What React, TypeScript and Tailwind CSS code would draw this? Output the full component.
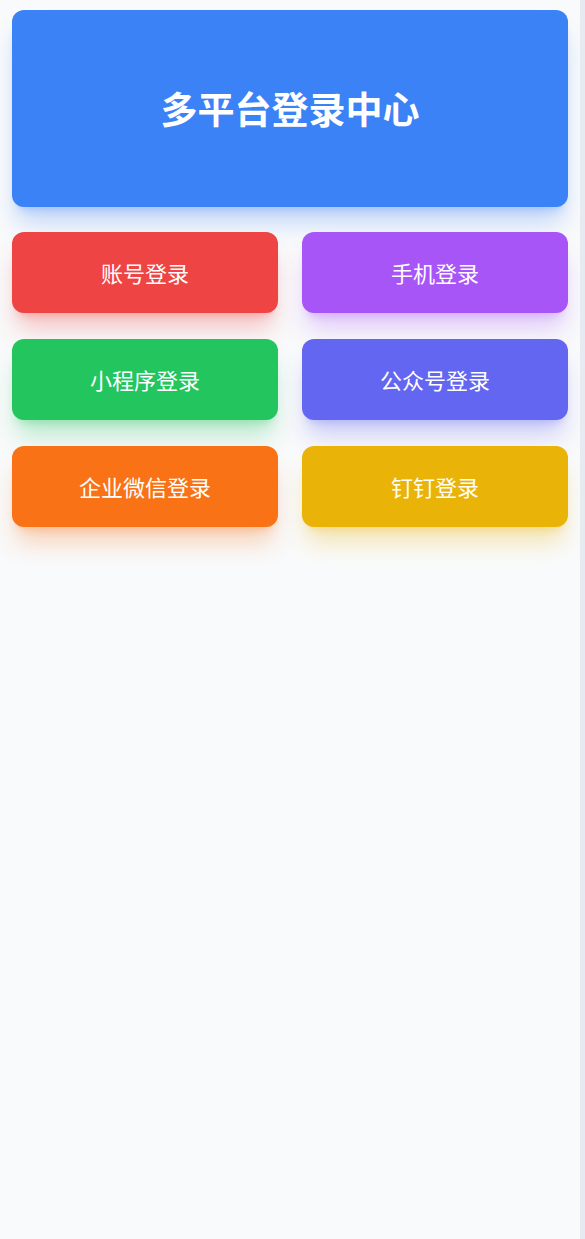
const buttons = [
  { label: "账号登录", cls: "bg-[#ef4444] shadow-[0_20px_25px_-5px_rgba(239,68,68,0.3),0_8px_10px_-6px_rgba(239,68,68,0.3)]" },
  { label: "手机登录", cls: "bg-[#a855f7] shadow-[0_20px_25px_-5px_rgba(168,85,247,0.3),0_8px_10px_-6px_rgba(168,85,247,0.3)]" },
  { label: "小程序登录", cls: "bg-[#22c55e] shadow-[0_20px_25px_-5px_rgba(34,197,94,0.3),0_8px_10px_-6px_rgba(34,197,94,0.3)]" },
  { label: "公众号登录", cls: "bg-[#6366f1] shadow-[0_20px_25px_-5px_rgba(99,102,241,0.3),0_8px_10px_-6px_rgba(99,102,241,0.3)]" },
  { label: "企业微信登录", cls: "bg-[#f97316] shadow-[0_20px_25px_-5px_rgba(249,115,22,0.3),0_8px_10px_-6px_rgba(249,115,22,0.3)]" },
  { label: "钉钉登录", cls: "bg-[#eab308] shadow-[0_20px_25px_-5px_rgba(234,179,8,0.3),0_8px_10px_-6px_rgba(234,179,8,0.3)]" },
];

export default function App() {
  return (
    <div
      className="flex h-screen w-full"
      style={{ fontFamily: '"Noto Sans CJK SC", "Noto Sans", sans-serif' }}
    >
      <div className="flex-1 bg-[#f9fafb] px-3 py-[10px]">
        <div className="flex h-[197px] items-center justify-center rounded-xl bg-[#3b82f6] shadow-[0_20px_25px_-5px_rgba(59,130,246,0.3),0_8px_10px_-6px_rgba(59,130,246,0.3)]">
          <h1 className="text-[37px] font-bold text-white">多平台登录中心</h1>
        </div>
        <div className="mt-[25px] grid grid-cols-2 gap-x-6 gap-y-[26px]">
          {buttons.map((b) => (
            <button
              key={b.label}
              className={`flex h-[81px] items-center justify-center rounded-xl text-[22px] font-normal text-white ${b.cls}`}
            >
              {b.label}
            </button>
          ))}
        </div>
      </div>
      <div className="w-[5px] bg-[#e6eaf1]" />
    </div>
  );
}
